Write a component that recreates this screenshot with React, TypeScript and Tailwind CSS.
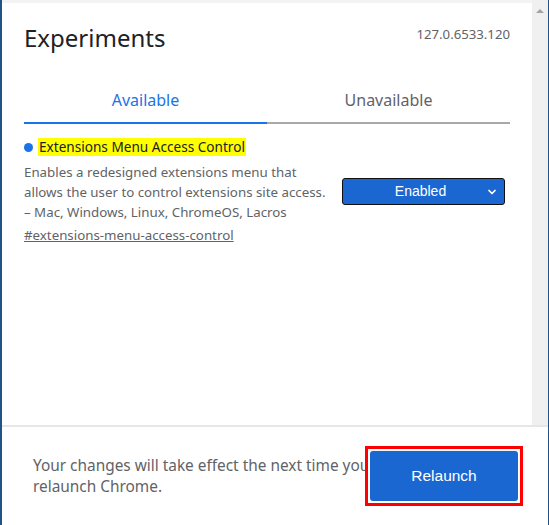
import { ChevronDown } from "lucide-react";

const font = { fontFamily: '"Noto Sans", "Open Sans", sans-serif' };

function Tabs() {
  return (
    <div className="mt-[34px] flex">
      <div className="flex-1 border-b-2 border-[#1a73e8] pb-[10px] text-center text-[16px] text-[#1a73e8]">
        Available
      </div>
      <div className="flex-1 border-b-2 border-[#a9a9a9] pb-[10px] text-center text-[16px] text-[#5f6368]">
        Unavailable
      </div>
    </div>
  );
}

function Experiment() {
  return (
    <div className="mt-[14px] flex items-start">
      <div className="flex-1">
        <div className="flex items-center">
          <span className="mr-[5px] h-[9px] w-[9px] rounded-full bg-[#1a73e8]" />
          <span className="bg-[#ffff00] px-[1px] text-[13.6px] leading-[18px] text-[#202124]">
            Extensions Menu Access Control
          </span>
        </div>
        <p className="mt-[6px] text-[13.3px] leading-[20px] text-[#5f6368]">
          Enables a redesigned extensions menu that
          <br />
          allows the user to control extensions site access.
          <br />– Mac, Windows, Linux, ChromeOS, Lacros
        </p>
        <a className="mt-[3px] block text-[13.3px] leading-[20px] text-[#5f6368] underline">
          #extensions-menu-access-control
        </a>
      </div>
      <div className="mt-[40px] mr-[5px] flex h-[27px] w-[163px] items-center rounded-[3px] border border-[#111] bg-[#1a67d2] text-white">
        <span className="flex-1 pl-[12px] text-center text-[14px]" style={{ fontFamily: '"Liberation Sans", Arial, sans-serif' }}>
          Enabled
        </span>
        <ChevronDown size={12} strokeWidth={3.5} className="mr-[6px]" />
      </div>
    </div>
  );
}

export default function App() {
  return (
    <div className="flex h-[525px] w-[549px] flex-col border-r border-l-2 border-[#1f5485] bg-white" style={font}>
      <div className="flex min-h-0 flex-1">
        <div className="flex-1 bg-[#f3f3f3] pt-[3px]">
          <div className="h-full bg-white px-[22px] pt-[19px]">
            <div className="flex items-center justify-between">
              <h1 className="text-[24px] leading-[32px] text-[#202124]">Experiments</h1>
              <span className="mt-[-6px] text-[13.2px] text-[#5f6368]">127.0.6533.120</span>
            </div>
            <Tabs />
            <Experiment />
          </div>
        </div>
        <div className="flex w-[16px] justify-center bg-[#f0f0f0] pt-[9px]">
          <div className="h-0 w-0 border-x-[4px] border-b-[4px] border-x-transparent border-b-[#a3a3a3]" />
        </div>
      </div>
      <div className="flex h-[100px] items-center border-t-2 border-[#e6e6e6] bg-white">
        <p className="w-[376px] shrink-0 pl-[31px] text-[15.4px] leading-[21px] text-[#5f6368]">
          Your changes will take effect the next time you relaunch Chrome.
        </p>
        <div className="relative z-10 ml-[-13px] border-[3px] border-[#ff0000] bg-white p-[2px]">
          <button className="flex h-[50px] w-[148px] items-center justify-center rounded-[3px] bg-[#1a67d2] text-[15.5px] text-white" style={{ fontFamily: '"Liberation Sans", Arial, sans-serif' }}>
            Relaunch
          </button>
        </div>
      </div>
    </div>
  );
}
